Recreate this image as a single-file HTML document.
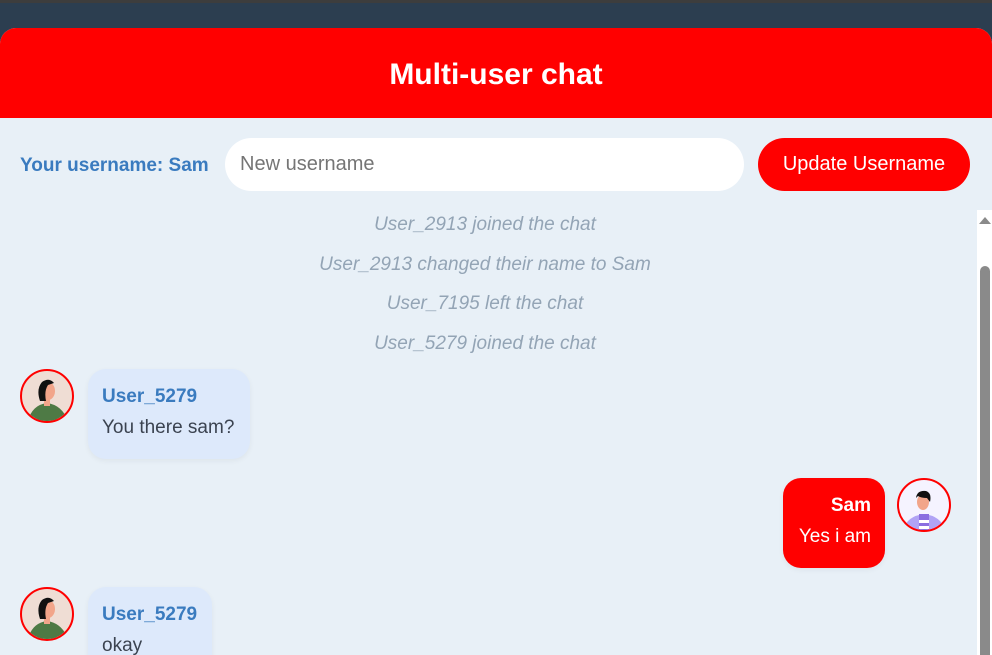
<!DOCTYPE html>
<html><head><meta charset="utf-8"><style>
*{box-sizing:border-box;margin:0;padding:0}
body{width:992px;height:655px;overflow:hidden;background:#2c3e50;font-family:"Liberation Sans",sans-serif;position:relative}
.topline{position:absolute;left:0;top:0;width:992px;height:3px;background:#3d3d3d}
.app{position:absolute;left:0;top:28px;width:992px;height:627px;background:#e8f0f7;border-radius:16px 16px 0 0;overflow:hidden}
.hdr{height:90px;background:#ff0000;color:#fff;font-weight:bold;font-size:30px;text-align:center;line-height:94px}
.lbl{position:absolute;left:20px;top:127px;color:#3a7bbf;font-weight:bold;font-size:19px;white-space:nowrap}
.inp{position:absolute;left:225px;top:110px;width:519px;height:53px;background:#fff;border-radius:27px;font-size:20px;color:#757575;padding:15px 0 0 15px}
.btn{position:absolute;left:758px;top:110px;width:212px;height:53px;background:#ff0000;border-radius:27px;color:#fff;font-size:20px;text-align:center;line-height:53px}
.sys{position:absolute;left:0;width:970px;text-align:center;color:#93a4b5;font-style:italic;font-size:19px}
.av{position:absolute;width:54px;height:54px;border-radius:50%;border:2px solid #f00;overflow:hidden}
.bub{position:absolute;background:#dde9fb;border-radius:18px;box-shadow:0 2px 6px rgba(0,0,0,.05);padding:17px 14px;white-space:nowrap}
.bub b{display:block;color:#3a7bbf;font-size:19px;margin-bottom:9px}
.bub span{display:block;color:#3b4350;font-size:19px}
.me{background:#ff0000;text-align:right}
.me b,.me span{color:#fff}
.track{position:absolute;left:977px;top:182px;width:15px;height:445px;background:#fff}
.thumb{position:absolute;left:980px;top:238px;width:10px;height:400px;background:#8a8a8a;border-radius:5px}
</style></head><body>
<div class="topline"></div>
<div class="app">
<div class="hdr">Multi-user chat</div>
<div class="lbl">Your username: Sam</div>
<div class="inp">New username</div>
<div class="btn">Update Username</div>
<div class="sys" style="top:186px">User_2913 joined the chat</div>
<div class="sys" style="top:226px">User_2913 changed their name to Sam</div>
<div class="sys" style="top:265px">User_7195 left the chat</div>
<div class="sys" style="top:305px">User_5279 joined the chat</div>

<div class="av" style="left:20px;top:341px;background:#efddd4"><svg width="50" height="50" viewBox="0 0 50 50"><path d="M6 50 Q10 34 25 32 Q40 34 46 50Z" fill="#4e7a45"/><path d="M22 28 L28 28 L28 35 L22 35Z" fill="#f2a58a"/><ellipse cx="26" cy="20" rx="7" ry="9" fill="#f2a58a"/><path d="M18 30 Q14 18 20 11 Q27 6 32 12 L26 14 Q22 20 24 30Z" fill="#111"/></svg></div>
<div class="bub" style="left:88px;top:341px;width:162px;height:90px"><b>User_5279</b><span>You there sam?</span></div>

<div class="bub me" style="left:783px;top:450px;width:102px;height:90px"><b>Sam</b><span>Yes i am</span></div>
<div class="av" style="left:897px;top:450px;background:#f5f3ff"><svg width="50" height="50" viewBox="0 0 50 50"><path d="M4 50 Q8 36 25 34 Q42 36 46 50Z" fill="#b1a3f5"/><rect x="20" y="34" width="10" height="16" fill="#8a6ee0"/><rect x="20" y="40" width="10" height="3" fill="#fff"/><rect x="20" y="46" width="10" height="3" fill="#fff"/><ellipse cx="24" cy="22" rx="6" ry="8" fill="#f2a58a"/><path d="M17 18 Q18 10 27 11 Q33 13 31 22 L28 18 Q22 18 19 16Z" fill="#111"/></svg></div>

<div class="av" style="left:20px;top:559px;background:#efddd4"><svg width="50" height="50" viewBox="0 0 50 50"><path d="M6 50 Q10 34 25 32 Q40 34 46 50Z" fill="#4e7a45"/><path d="M22 28 L28 28 L28 35 L22 35Z" fill="#f2a58a"/><ellipse cx="26" cy="20" rx="7" ry="9" fill="#f2a58a"/><path d="M18 30 Q14 18 20 11 Q27 6 32 12 L26 14 Q22 20 24 30Z" fill="#111"/></svg></div>
<div class="bub" style="left:88px;top:559px;width:124px;height:90px"><b>User_5279</b><span>okay</span></div>

<div class="track"></div>
<div class="thumb"></div>
<svg style="position:absolute;left:979px;top:189px" width="12" height="8"><path d="M0 7 L6 0 L12 7Z" fill="#8a8a8a"/></svg>
</div>
</body></html>
